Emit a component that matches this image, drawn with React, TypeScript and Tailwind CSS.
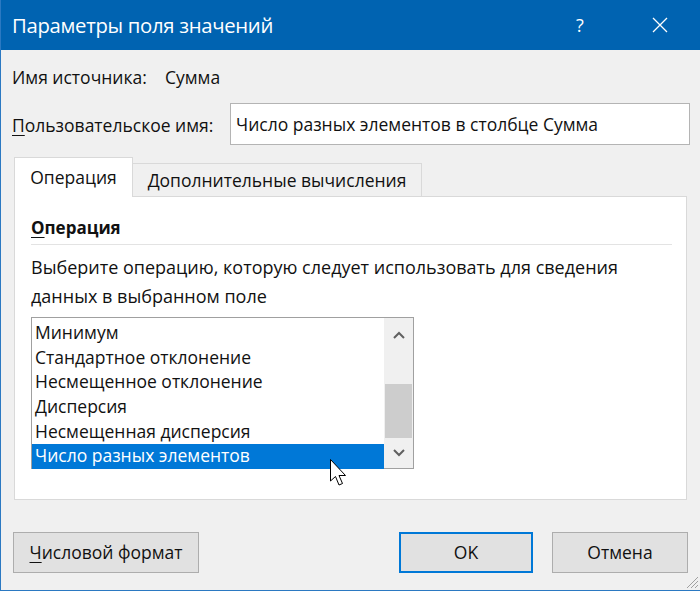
import React from 'react';

const items = [
    'Минимум',
    'Стандартное отклонение',
    'Несмещенное отклонение',
    'Дисперсия',
    'Несмещенная дисперсия',
    'Число разных элементов',
];

function Chevron({ up }: { up?: boolean }) {
    return (
        <svg width="12" height="8" viewBox="0 0 12 8">
            <path
                d={up ? 'M1 7 L6 2 L11 7' : 'M1 1 L6 6 L11 1'}
                fill="none"
                stroke="#606060"
                strokeWidth="2"
            />
        </svg>
    );
}

function Cursor() {
    return (
        <svg width="20" height="30" viewBox="0 0 20 30" className="absolute left-[328px] top-[458px]">
            <path
                d="M1.5 1.5 L1.5 23 L6.5 18.5 L10 27 L13.5 25.5 L10 17.5 L16.5 17.5 Z"
                fill="#fff"
                stroke="#000"
                strokeWidth="1"
                strokeLinejoin="round"
            />
        </svg>
    );
}

export default function App() {
    return (
        <div
            className="relative w-[700px] h-[591px] bg-[#f0f0f0] border-l border-b border-[#2b79c2] flex flex-col overflow-hidden"
            style={{ fontFamily: '"Open Sans", "Noto Sans", sans-serif' }}
        >
            {/* title bar */}
            <div className="h-[50px] bg-[#0063b1] flex items-center text-white shrink-0">
                <div className="pl-[11px] text-[20.3px] tracking-[-0.3px] flex-1">Параметры поля значений</div>
                <div className="w-[40px] text-center text-[18px] mr-[40px]">?</div>
                <div className="w-[40px] flex justify-center mr-[20px]">
                    <svg width="16" height="16" viewBox="0 0 16 16">
                        <path d="M1 1 L15 15 M15 1 L1 15" stroke="#fff" strokeWidth="1.3" />
                    </svg>
                </div>
            </div>

            {/* source name */}
            <div className="mt-[14px] h-[26px] flex items-center px-[11px] text-[17.5px] text-[#111]">
                <span className="w-[153px]">Имя источника:</span>
                <span>Сумма</span>
            </div>

            {/* custom name */}
            <div className="mt-[13px] flex items-center pl-[11px] pr-[10px] text-[17.5px] text-[#111]">
                <span className="w-[218px] mt-[3px]">
                    <span className="underline underline-offset-[3px]">П</span>ользовательское имя:
                </span>
                <div className="flex-1 h-[42px] bg-white border border-[#b4b4b4] flex items-center px-[5px]">
                    Число разных элементов в столбце Сумма
                </div>
            </div>

            {/* tabs */}
            <div className="mt-[13px] mx-[13px] flex items-end relative z-10 h-[39px]">
                <div className="h-[40px] w-[119px] bg-white border border-b-0 border-[#d9d9d9] flex items-center justify-center text-[17.5px] text-[#111]">
                    Операция
                </div>
                <div className="h-[34px] w-[289px] bg-[#f0f0f0] border border-l-0 border-[#d9d9d9] flex items-center justify-center text-[17.5px] text-[#111]">
                    Дополнительные вычисления
                </div>
            </div>

            {/* panel */}
            <div className="mx-[13px] h-[304px] -mt-[1px] bg-white border border-[#d9d9d9] pl-[16px] pr-[14px]">
                <div className="mt-[19px] text-[17px] font-bold text-[#111] leading-[24px]">
                    <span className="underline underline-offset-[3px]">О</span>перация
                </div>
                <div className="mt-[4px] h-px bg-[#e3e3e3]" />
                <div className="mt-[8px] text-[18px] text-[#111] leading-[29px]">
                    Выберите операцию, которую следует использовать для сведения
                    <br />
                    данных в выбранном поле
                </div>
                <div className="mt-[6px] w-[383px] h-[152px] border border-[#a0a0a0] flex">
                    <div className="flex-1 pt-[3px]">
                        {items.map((it, i) => (
                            <div
                                key={it}
                                className={
                                    'h-[24.6px] flex items-center pl-[3px] pb-[2px] text-[17.5px] ' +
                                    (i === items.length - 1 ? 'bg-[#0078d7] text-white' : 'text-[#111]')
                                }
                            >
                                {it}
                            </div>
                        ))}
                    </div>
                    <div className="w-[29px] bg-[#f0f0f0] flex flex-col">
                        <div className="h-[33px] flex items-center justify-center">
                            <Chevron up />
                        </div>
                        <div className="h-[33px]" />
                        <div className="h-[54px] bg-[#cdcdcd] mx-[1px]" />
                        <div className="flex-1 flex items-center justify-center">
                            <Chevron />
                        </div>
                    </div>
                </div>
            </div>

            {/* buttons */}
            <div className="mt-[32px] flex items-center pl-[12px] pr-[12px] text-[17.5px] text-[#111]">
                <button className="w-[186px] h-[41px] bg-[#e1e1e1] border border-[#adadad]">
                    <span className="underline underline-offset-[3px]">Ч</span>исловой формат
                </button>
                <div className="flex-1" />
                <button className="w-[134px] h-[41px] bg-[#e1e1e1] border-2 border-[#0078d7]">OK</button>
                <button className="ml-[19px] w-[136px] h-[41px] bg-[#e1e1e1] border border-[#adadad]">
                    Отмена
                </button>
            </div>

            {/* resize grip */}
            <svg width="16" height="16" viewBox="0 0 16 16" className="absolute right-[1px] bottom-[1px]">
                <path d="M15 4 L4 15 M15 8 L8 15 M15 12 L12 15" stroke="#a0a0a0" strokeWidth="1" />
            </svg>

            <Cursor />
        </div>
    );
}
